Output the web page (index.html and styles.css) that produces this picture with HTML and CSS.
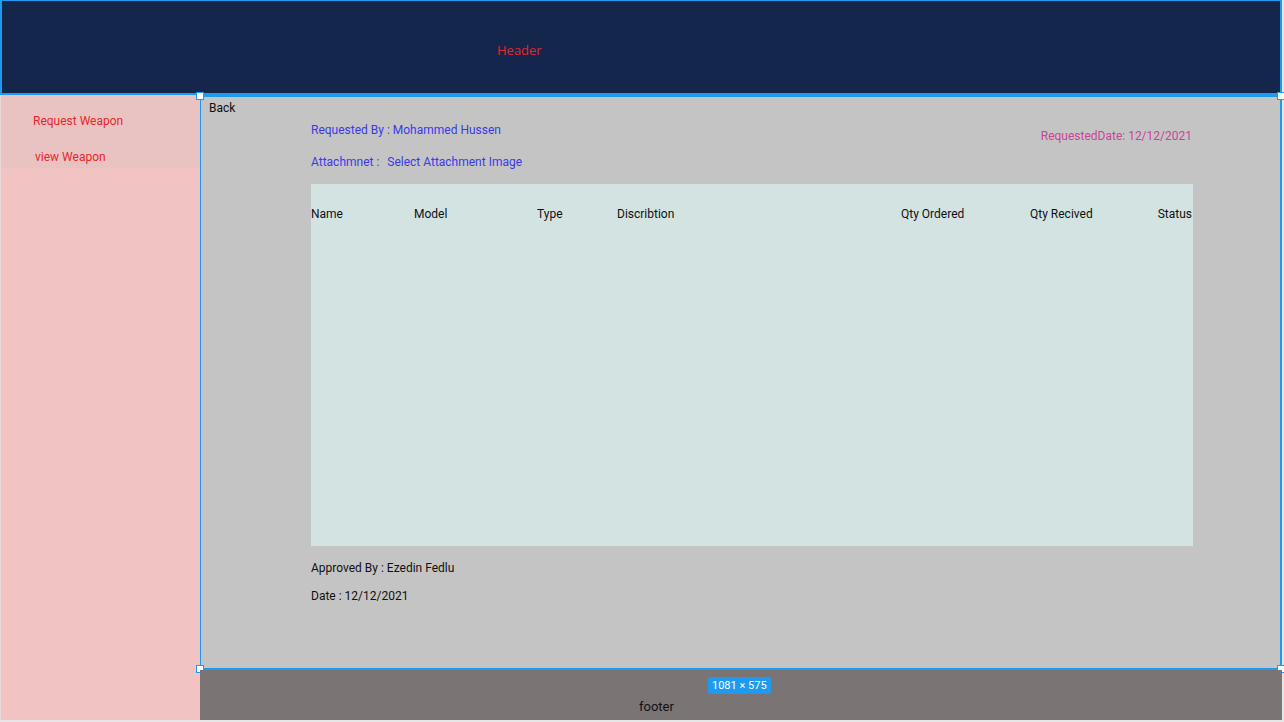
FILE: index.html
```html
<!DOCTYPE html>
<html lang="en">
<head>
<meta charset="utf-8">
<title>Weapon Request</title>
<link rel="stylesheet" href="styles.css">
</head>
<body>
<div class="app">
  <header class="header"><span class="header-title">Header</span></header>
  <aside class="sidebar">
    <nav class="nav">
      <a class="nav-item">Request Weapon</a>
      <a class="nav-item nav-item-2">view Weapon</a>
    </nav>
  </aside>
  <main class="main">
    <span class="handle h-tl"></span>
    <span class="handle h-tr"></span>
    <span class="handle h-bl"></span>
    <span class="handle h-br"></span>
    <div class="back">Back</div>
    <div class="details">
      <div class="info">
        <div class="info-left">
          <div class="blue">Requested By : Mohammed Hussen</div>
          <div class="blue attach">Attachmnet : &nbsp;<span class="attach-link">Select Attachment Image</span></div>
        </div>
        <div class="date-req">RequestedDate: 12/12/2021</div>
      </div>
      <div class="table">
        <div class="thead">
          <span>Name</span>
          <span>Model</span>
          <span>Type</span>
          <span>Discribtion</span>
          <span>Qty Ordered</span>
          <span>Qty Recived</span>
          <span>Status</span>
        </div>
      </div>
      <div class="approved">Approved By : Ezedin Fedlu</div>
      <div class="date">Date : 12/12/2021</div>
    </div>
  </main>
  <footer class="footer">
    <span class="badge">1081 × 575</span>
    <span class="footer-text">footer</span>
  </footer>
</div>
</body>
</html>
```
FILE: styles.css
```css
* { box-sizing: border-box; }
html, body { margin: 0; padding: 0; }
body {
  background: #e6e6e6;
  font-family: Roboto, "Liberation Sans", sans-serif;
  font-size: 12px;
  line-height: 14px;
  color: #111;
}
.app {
  width: 1282px;
  height: 720px;
  display: grid;
  grid-template-columns: 200px 1082px;
  grid-template-rows: 95px 575px 50px;
}
.header {
  grid-column: 1 / 3;
  background: #14264b;
  border: 2px solid #1e9bf0;
  border-top-width: 1px;
  padding-left: 495px;
  padding-top: 41px;
}
.header-title {
  color: #e4282d;
  font-size: 13px;
  line-height: 16px;
  font-family: "Open Sans", Roboto, sans-serif;
}
.sidebar {
  grid-row: 2 / 4;
  grid-column: 1;
  background: #f1c3c3;
  border-left: 1px solid #e9d9d9;
}
.nav {
  background: #e8c3c2;
  height: 73px;
  display: flex;
  flex-direction: column;
  padding: 19px 0 0 32px;
  gap: 22px;
}
.nav-item { color: #e8262b; }
.nav-item-2 { padding-left: 2px; }
.main {
  grid-row: 2;
  grid-column: 2;
  position: relative;
  background: #c4c4c4;
  border: 2px solid #1e9bf0;
  border-left-width: 1px;
  padding: 4px 87px 0 8px;
}
.handle {
  position: absolute;
  width: 8px;
  height: 8px;
  background: #fff;
  border: 1px solid #1e9bf0;
}
.h-tl { left: -5px; top: -5px; }
.h-tr { right: -5px; top: -5px; }
.h-bl { left: -5px; bottom: -5px; }
.h-br { right: -5px; bottom: -5px; }
.back { color: #111; }
.details {
  margin-left: 102px;
  margin-top: 8px;
}
.info {
  display: flex;
  justify-content: space-between;
  padding-right: 1px;
}
.info-left {
  display: flex;
  flex-direction: column;
  gap: 18px;
}
.blue { color: #3a3aea; }
.attach-link { margin-left: 2px; }
.date-req {
  color: #c9449c;
  margin-top: 6px;
}
.table {
  margin-top: 15px;
  height: 362px;
  background: #d2e3e2;
  padding-top: 23px;
}
.thead {
  display: grid;
  grid-template-columns: 103px 123px 80px 284px 129px 1fr auto;
  color: #111;
  padding-right: 1px;
}
.approved { margin-top: 15px; }
.date { margin-top: 14px; }
.footer {
  grid-row: 3;
  grid-column: 2;
  position: relative;
  background: #7a7574;
  padding: 29px 0 0 439px;
}
.footer-text {
  font-size: 13px;
  line-height: 16px;
  color: #111;
}
.badge {
  position: absolute;
  left: 508px;
  top: 7px;
  background: #1e9bf0;
  color: #fff;
  font-size: 11px;
  line-height: 17px;
  padding: 0 4px;
  border-radius: 2px;
}
```
